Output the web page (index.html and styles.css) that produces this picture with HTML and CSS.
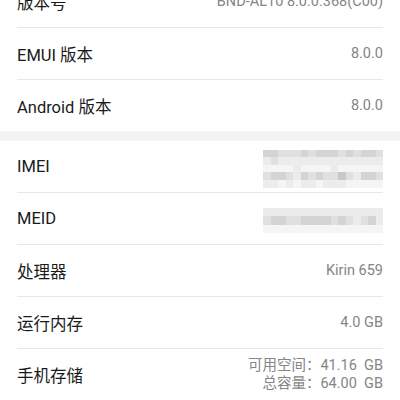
FILE: index.html
```html
<!DOCTYPE html>
<html lang="zh-CN">
<head>
    <meta charset="UTF-8">
    <meta name="viewport" content="width=device-width, initial-scale=1.0">
    <title>关于手机</title>
    <link rel="stylesheet" href="styles.css">
</head>
<body>
    <section class="group first">
        <div class="row">
            <span class="label">版本号</span>
            <span class="value">BND-AL10 8.0.0.368(C00)</span>
        </div>
        <div class="row">
            <span class="label">EMUI 版本</span>
            <span class="value">8.0.0</span>
        </div>
        <div class="row">
            <span class="label">Android 版本</span>
            <span class="value">8.0.0</span>
        </div>
    </section>

    <div class="spacer"></div>

    <section class="group">
        <div class="row">
            <span class="label">IMEI</span>
            <!-- pixelated, hidden number -->
            <div class="mosaic imei">
                <i class="d"></i><i class="d"></i><i class="m"></i><i class="m"></i><i class="m"></i><i class="d"></i><i class="m"></i><i class="d"></i><i class="d"></i><i class="d"></i><i class="m"></i><i class="d"></i><i class="m"></i><i class="d"></i><i class="d"></i><i class="m"></i>
                <i class="l"></i><i class="m"></i><i class="l"></i><i class="l"></i><i class="l"></i><i class="l"></i><i class="l"></i><i class="l"></i><i class="l"></i><i class="l"></i><i class="l"></i><i class="l"></i><i class="l"></i><i class="l"></i><i class="l"></i><i class="l"></i>
                <i class="v"></i><i class="v"></i><i class="v"></i><i class="v"></i><i class="l"></i><i class="v"></i><i class="v"></i><i class="v"></i><i class="v"></i><i class="l"></i><i class="v"></i><i class="v"></i><i class="v"></i><i class="v"></i><i class="v"></i><i class="v"></i>
                <i class="m"></i><i class="d"></i><i class="d"></i><i class="m"></i><i class="l"></i><i class="d"></i><i class="m"></i><i class="d"></i><i class="m"></i><i class="m"></i><i class="x"></i><i class="m"></i><i class="l"></i><i class="d"></i><i class="d"></i><i class="m"></i>
                <i class="l"></i><i class="l"></i><i class="v"></i><i class="l"></i><i class="v"></i><i class="l"></i><i class="l"></i><i class="v"></i><i class="l"></i><i class="l"></i><i class="l"></i><i class="v"></i><i class="v"></i><i class="v"></i><i class="v"></i><i class="v"></i>
            </div>
        </div>
        <div class="row">
            <span class="label">MEID</span>
            <div class="mosaic meid">
                <i class="l"></i><i class="l"></i><i class="l"></i><i class="l"></i><i class="l"></i><i class="l"></i><i class="l"></i><i class="l"></i><i class="l"></i><i class="l"></i><i class="l"></i><i class="l"></i><i class="l"></i><i class="l"></i><i class="l"></i><i class="l"></i>
                <i class="m"></i><i class="d"></i><i class="d"></i><i class="m"></i><i class="m"></i><i class="d"></i><i class="d"></i><i class="d"></i><i class="d"></i><i class="m"></i><i class="d"></i><i class="m"></i><i class="l"></i><i class="m"></i><i class="d"></i><i class="l"></i>
                <i class="v"></i><i class="v"></i><i class="v"></i><i class="v"></i><i class="v"></i><i class="v"></i><i class="v"></i><i class="v"></i><i class="v"></i><i class="v"></i><i class="v"></i><i class="v"></i><i class="v"></i><i class="v"></i><i class="v"></i><i class="v"></i>
            </div>
        </div>
        <div class="row">
            <span class="label">处理器</span>
            <span class="value">Kirin 659</span>
        </div>
        <div class="row">
            <span class="label">运行内存</span>
            <span class="value">4.0 GB</span>
        </div>
        <div class="row">
            <span class="label">手机存储</span>
            <div class="value stack">
                <span>可用空间：41.16  GB</span>
                <span>总容量：64.00  GB</span>
            </div>
        </div>
    </section>
</body>
</html>
```

FILE: styles.css
```css
html, body {
    margin: 0;
    padding: 0;
    overflow: hidden;
    background-color: #fff;
}

body {
    font-family: Roboto, "Noto Sans CJK SC", sans-serif;
    color: #1a1a1a;
}

.group {
    padding: 0 17px;
}

.group.first {
    margin-top: -24px;
}

.row {
    display: flex;
    align-items: center;
    justify-content: space-between;
    height: 51px;
    border-bottom: 1px solid #e8e8e8;
}

.group.first .row:last-child {
    border-bottom: none;
}

.label {
    font-size: 16.5px;
}

.value {
    font-size: 14.5px;
    color: #858585;
    text-align: right;
}

.stack {
    display: flex;
    flex-direction: column;
    line-height: 18px;
    white-space: pre;
}

.spacer {
    height: 10px;
    background-color: #f4f4f4;
}

.mosaic {
    display: grid;
    grid-template-columns: repeat(16, 1fr);
    width: 120px;
}

.mosaic.imei {
    height: 38px;
    margin-top: 4px;
}

.mosaic.meid {
    height: 25px;
    margin-top: 4px;
}

.mosaic i {
    display: block;
}

.mosaic .x { background-color: #c8c8c8; }
.mosaic .d { background-color: #d4d4d4; }
.mosaic .m { background-color: #e0e0e0; }
.mosaic .l { background-color: #ececec; }
.mosaic .v { background-color: #f5f5f5; }
```
